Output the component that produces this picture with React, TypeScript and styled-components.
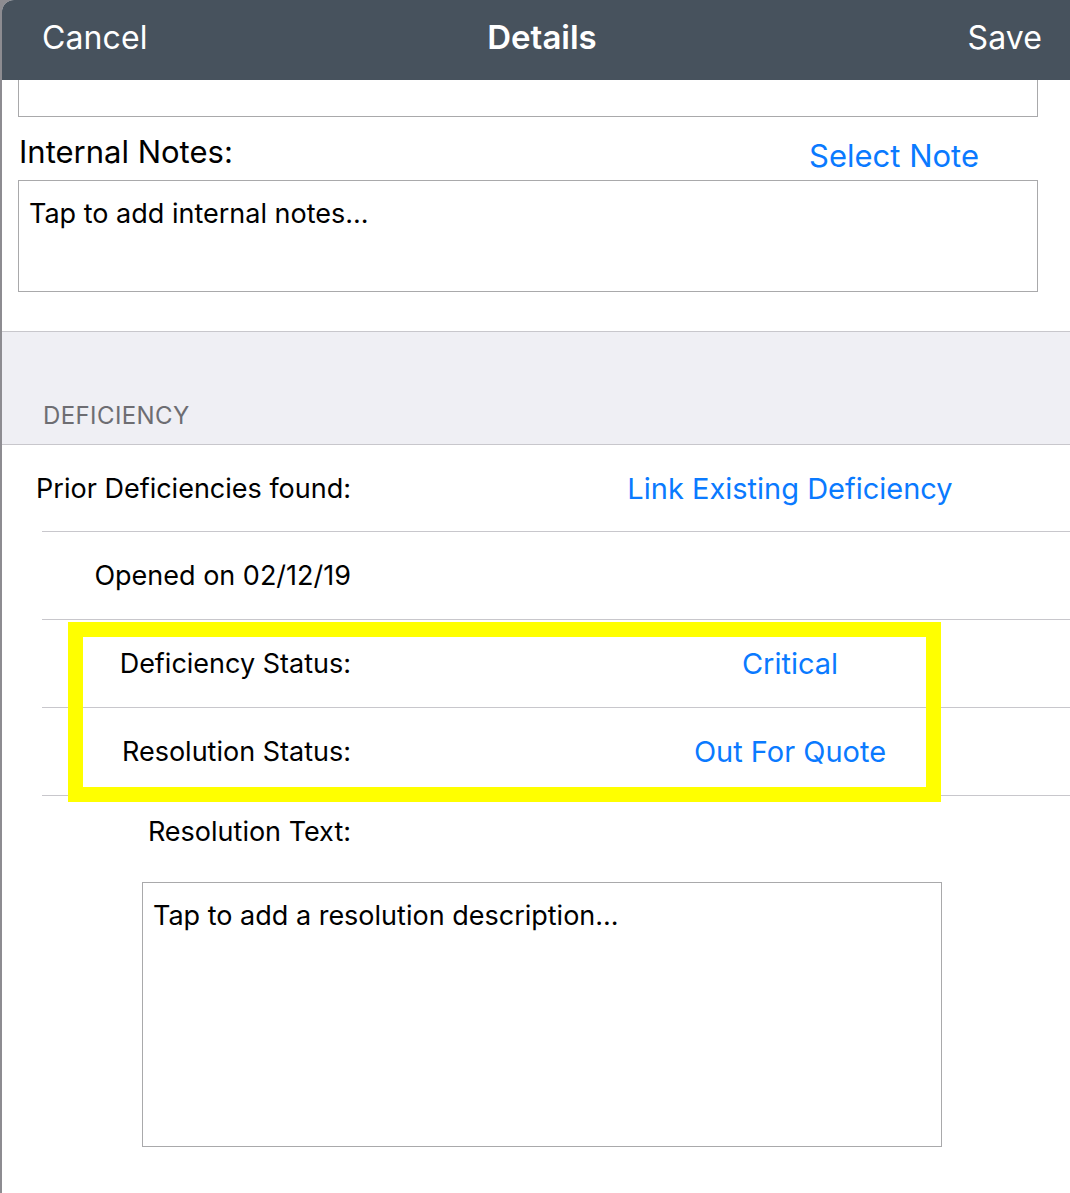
import React from "react";
import styled, { createGlobalStyle } from "styled-components";

const GlobalStyle = createGlobalStyle`
  html, body {
    margin: 0;
    padding: 0;
    background: #8d8c91;
    overflow: hidden;
  }
  body {
    font-family: Inter, "Noto Sans", "Liberation Sans", sans-serif;
    -webkit-font-smoothing: antialiased;
  }
`;

const Sheet = styled.div`
  margin-left: 2px;
  height: 1193px;
  background: #ffffff;
  border-top-left-radius: 12px;
  overflow: hidden;
  display: flex;
  flex-direction: column;
`;

const NavBar = styled.header`
  height: 80px;
  flex: none;
  background: #47525d;
  display: grid;
  grid-template-columns: 1fr auto 1fr;
  align-items: center;
  padding: 0 28px 6px 40px;
  box-sizing: border-box;
  color: #ffffff;
  font-size: 32px;
`;

const NavButton = styled.span<{ $align: "left" | "right" }>`
  justify-self: ${(p) => (p.$align === "left" ? "start" : "end")};
  font-weight: 400;
  letter-spacing: 0.1px;
`;

const NavTitle = styled.span`
  font-weight: 600;
  font-size: 33px;
`;

const TextBox = styled.div<{ $height: number; $clippedTop?: boolean }>`
  box-sizing: border-box;
  height: ${(p) => p.$height}px;
  border: 1px solid #a9a9ab;
  ${(p) => (p.$clippedTop ? "border-top: none;" : "")}
  padding: 16px 10px;
  font-size: 27px;
  line-height: 34px;
  color: #000;
`;

const UpperBlock = styled.div`
  padding: 0 32px 0 16px;
  display: flex;
  flex-direction: column;
`;

const NotesHeader = styled.div`
  height: 63px;
  display: flex;
  justify-content: space-between;
  align-items: center;
  padding-top: 6px;
  box-sizing: border-box;
`;

const NotesLabel = styled.span`
  font-size: 31px;
  color: #000;
  margin-left: 1px;
`;

const LinkText = styled.span`
  color: #0a7aff;
  font-size: 29px;
`;

const SelectNote = styled(LinkText)`
  font-size: 31px;
  margin-top: 8px;
  margin-right: 59px;
`;

const Spacer = styled.div<{ $h: number }>`
  height: ${(p) => p.$h}px;
  flex: none;
`;

const SectionHeader = styled.div`
  height: 114px;
  box-sizing: border-box;
  background: #efeff4;
  border-top: 1px solid #c8c7cc;
  border-bottom: 1px solid #c8c7cc;
  display: flex;
  align-items: flex-end;
  padding: 0 0 14px 41px;
  color: #6d6d72;
  font-size: 24px;
  letter-spacing: 0.4px;
`;

const Row = styled.div<{ $h: number; $divider?: boolean }>`
  height: ${(p) => p.$h}px;
  box-sizing: border-box;
  margin-left: 40px;
  display: grid;
  grid-template-columns: 309px 380px;
  column-gap: 249px;
  align-items: center;
  border-bottom: ${(p) => (p.$divider ? "1px solid #c8c7cc" : "none")};
`;

const RowLabel = styled.span`
  display: flex;
  justify-content: flex-end;
  white-space: nowrap;
  font-size: 27px;
  color: #000;
`;

const RowValue = styled(LinkText)`
  text-align: center;
  white-space: nowrap;
`;

const HighlightGroup = styled.div`
  position: relative;
`;

const Highlight = styled.div`
  position: absolute;
  left: 66px;
  top: 2px;
  width: 873px;
  height: 180px;
  box-sizing: border-box;
  border: 15px solid #ffff00;
  pointer-events: none;
`;

const ResolutionBlock = styled.div`
  padding-left: 140px;
  width: 800px;
`;

export default function App() {
  return (
    <>
      <GlobalStyle />
      <Sheet>
        <NavBar>
          <NavButton $align="left">Cancel</NavButton>
          <NavTitle>Details</NavTitle>
          <NavButton $align="right">Save</NavButton>
        </NavBar>

        <UpperBlock>
          <TextBox $height={37} $clippedTop />
          <NotesHeader>
            <NotesLabel>Internal Notes:</NotesLabel>
            <SelectNote>Select Note</SelectNote>
          </NotesHeader>
          <TextBox $height={112}>Tap to add internal notes...</TextBox>
        </UpperBlock>

        <Spacer $h={39} />

        <SectionHeader>DEFICIENCY</SectionHeader>

        <Row $h={87} $divider>
          <RowLabel>Prior Deficiencies found:</RowLabel>
          <RowValue>Link Existing Deficiency</RowValue>
        </Row>
        <Row $h={88} $divider>
          <RowLabel>Opened on 02/12/19</RowLabel>
        </Row>
        <HighlightGroup>
          <Row $h={88} $divider>
            <RowLabel>Deficiency Status:</RowLabel>
            <RowValue>Critical</RowValue>
          </Row>
          <Row $h={88} $divider>
            <RowLabel>Resolution Status:</RowLabel>
            <RowValue>Out For Quote</RowValue>
          </Row>
          <Highlight />
        </HighlightGroup>
        <Row $h={71}>
          <RowLabel>Resolution Text:</RowLabel>
        </Row>
        <ResolutionBlock>
          <Spacer $h={15} />
          <TextBox $height={265}>Tap to add a resolution description...</TextBox>
        </ResolutionBlock>
      </Sheet>
    </>
  );
}
